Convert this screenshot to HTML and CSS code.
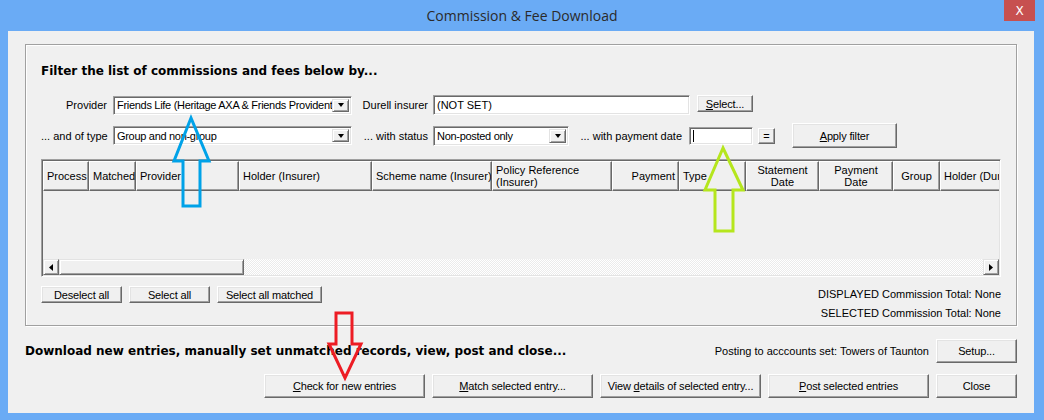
FILE: index.html
```html
<!DOCTYPE html>
<html lang="en">
<head>
    <meta charset="UTF-8">
    <title>Commission &amp; Fee Download</title>
    <link rel="stylesheet" href="styles.css">
</head>
<body>

<div class="window">
    <div class="titlebar">
        <span></span>
        <span class="title">Commission &amp; Fee Download</span>
        <button class="close-btn">X</button>
    </div>

    <div class="client">
        <div class="group">
            <h2>Filter the list of commissions and fees below by...</h2>

            <div class="filter-row first">
                <label class="lbl lbl-a">Provider</label>
                <div class="combo provider"><span>Friends Life (Heritage AXA &amp; Friends Provident)</span><i class="drop"></i></div>
                <label class="lbl lbl-b">Durell insurer</label>
                <div class="edit insurer">(NOT SET)</div>
                <button class="btn select-btn"><u>S</u>elect...</button>
            </div>

            <div class="filter-row second">
                <label class="lbl lbl-a">... and of type</label>
                <div class="combo provider"><span>Group and non-group</span><i class="drop"></i></div>
                <label class="lbl lbl-b">... with status</label>
                <div class="combo status"><span>Non-posted only</span><i class="drop"></i></div>
                <label class="lbl lbl-c">... with payment date</label>
                <div class="edit pay-date"><i class="caret"></i></div>
                <button class="btn eq-btn">=</button>
                <button class="btn apply-btn"><u>A</u>pply filter</button>
            </div>

            <div class="grid">
                <div class="grid-head">
                    <div style="width:46px">Process</div>
                    <div style="width:47px">Matched</div>
                    <div style="width:103px">Provider</div>
                    <div style="width:133px">Holder (Insurer)</div>
                    <div style="width:120px">Scheme name (Insurer)</div>
                    <div style="width:120px">Policy Reference<br>(Insurer)</div>
                    <div class="r" style="width:67px">Payment</div>
                    <div style="width:67px">Type</div>
                    <div class="c" style="width:73px">Statement<br>Date</div>
                    <div class="c" style="width:74px">Payment<br>Date</div>
                    <div class="c" style="width:47px">Group</div>
                    <div class="last">Holder (Durell)</div>
                </div>
                <div class="grid-body"></div>
                <div class="hscroll">
                    <div class="sb-btn">
                        <svg width="4" height="7" viewBox="0 0 4 7"><path d="M4 0V7L0 3.5Z" fill="#000"/></svg>
                    </div>
                    <div class="sb-thumb"></div>
                    <div class="sb-track"></div>
                    <div class="sb-btn">
                        <svg width="4" height="7" viewBox="0 0 4 7"><path d="M0 0V7L4 3.5Z" fill="#000"/></svg>
                    </div>
                </div>
            </div>

            <div class="list-actions">
                <div class="list-buttons">
                    <button class="btn w81">Deselect all</button>
                    <button class="btn w81">Select all</button>
                    <button class="btn w105">Select all matched</button>
                </div>
                <div class="totals">
                    <div>DISPLAYED Commission Total: None</div>
                    <div>SELECTED Commission Total: None</div>
                </div>
            </div>
        </div>

        <div class="summary">
            <h2>Download new entries, manually set unmatched records, view, post and close...</h2>
            <div class="posting">
                <span>Posting to acccounts set: Towers of Taunton</span>
                <button class="btn big w81">Setup...</button>
            </div>
        </div>

        <div class="actions">
            <button class="btn big w161"><u>C</u>heck for new entries</button>
            <button class="btn big w161"><u>M</u>atch selected entry...</button>
            <button class="btn big w161">View <u>d</u>etails of selected entry...</button>
            <button class="btn big w161"><u>P</u>ost selected entries</button>
            <button class="btn big w81">Close</button>
        </div>
    </div>

    <!-- annotation arrows drawn over the dialog -->
    <svg class="marks" width="1044" height="420" viewBox="0 0 1044 420">
        <polygon points="191,118 174,161 183,161 183,206 200,206 200,161 209,161" fill="none" stroke="#00a2e8" stroke-width="3"/>
        <polygon points="723,148 705,190 715,190 715,231 733,231 733,190 743,190" fill="none" stroke="#b5e61d" stroke-width="3"/>
        <polygon points="336,313 352,313 352,344 361,344 345,378 329,344 336,344" fill="none" stroke="#ed1c24" stroke-width="3"/>
    </svg>
</div>

</body>
</html>
```

FILE: styles.css
```css
* {
    box-sizing: border-box;
}
body {
    margin: 0;
    font-family: "Liberation Sans", Arial, sans-serif;
    font-size: 11px;
    color: #000;
    background: #fff;
}
.window {
    position: relative;
    width: 1044px;
    height: 420px;
    background: #6aabf5;
    overflow: hidden;
}
.titlebar {
    height: 31px;
    display: grid;
    grid-template-columns: 1fr auto 1fr;
    align-items: start;
    padding: 0 9px;
}
.title {
    font-family: "Open Sans", sans-serif;
    font-size: 14px;
    line-height: 31px;
    color: #2a2a2a;
}
.close-btn {
    justify-self: end;
    width: 31px;
    height: 21px;
    border: none;
    padding: 0;
    background: #c75050;
    color: #fff;
    font: 12px "DejaVu Sans", sans-serif;
}
.client {
    margin: 0 10px 0 8px;
    height: 382px;
    background: #f0f0f0;
    padding: 13px 17px 0;
}
.group {
    height: 282px;
    border: 1px solid #a0a0a0;
    box-shadow: inset 1px 1px #fff, 1px 1px #fff;
    padding: 20px 15px 0;
}
h2 {
    margin: 0;
    font: bold 12px/13px "DejaVu Sans", Verdana, sans-serif;
    white-space: nowrap;
}
.filter-row {
    display: flex;
    align-items: center;
}
.filter-row.first {
    height: 20px;
    margin-top: 17px;
}
.filter-row.second {
    height: 25px;
    margin-top: 8px;
}
.lbl {
    flex: none;
    text-align: right;
    white-space: nowrap;
}
.lbl-a {
    width: 66px;
    margin-right: 6px;
}
.lbl-b {
    width: 76px;
    margin-right: 5px;
}
.lbl-c {
    width: 113px;
    margin-right: 7px;
}
.combo, .edit {
    flex: none;
    display: flex;
    align-items: center;
    background: #fff;
    border: 1px solid;
    border-color: #a0a0a0 #fff #fff #a0a0a0;
    box-shadow: inset 1px 1px #696969, inset -1px -1px #e3e3e3;
    padding: 2px 2px 2px 3px;
    white-space: nowrap;
    overflow: hidden;
}
.combo span {
    flex: 1;
    overflow: hidden;
    letter-spacing: -0.3px;
}
.combo.provider {
    width: 239px;
    height: 19px;
}
.combo.status {
    width: 136px;
    height: 20px;
}
.drop {
    flex: none;
    width: 17px;
    height: 100%;
    display: flex;
    align-items: center;
    justify-content: center;
    background: #f0f0f0;
    border: 1px solid;
    border-color: #e3e3e3 #696969 #696969 #e3e3e3;
    box-shadow: inset 1px 1px #fff, inset -1px -1px #a0a0a0;
}
.drop::after {
    content: "";
    border-left: 3.5px solid transparent;
    border-right: 3.5px solid transparent;
    border-top: 4px solid #000;
}
.insurer {
    width: 257px;
    height: 20px;
}
.pay-date {
    width: 64px;
    height: 18px;
}
.caret {
    width: 1px;
    height: 12px;
    background: #000;
}
.btn {
    flex: none;
    padding: 0;
    background: #f0f0f0;
    border: 1px solid;
    border-color: #fff #696969 #696969 #fff;
    box-shadow: inset -1px -1px #a0a0a0, inset 1px 1px #e3e3e3;
    font: 11px "Liberation Sans", Arial, sans-serif;
    letter-spacing: -0.15px;
    color: #000;
    height: 17px;
}
.select-btn {
    width: 56px;
    margin-left: 7px;
    align-self: flex-start;
}
.eq-btn {
    width: 17px;
    height: 16px;
    margin-left: 5px;
}
.apply-btn {
    width: 105px;
    height: 25px;
    margin-left: 17px;
}
.grid {
    margin-top: 11px;
    height: 118px;
    display: flex;
    flex-direction: column;
    border: 1px solid;
    border-color: #a0a0a0 #fff #fff #a0a0a0;
    box-shadow: inset 1px 1px #696969, inset -1px -1px #e3e3e3;
    padding: 1px;
}
.grid-head {
    display: flex;
    height: 30px;
    flex: none;
    overflow: hidden;
}
.grid-head div {
    flex: none;
    height: 30px;
    display: flex;
    align-items: center;
    padding: 0 3px;
    line-height: 12px;
    white-space: nowrap;
    overflow: hidden;
    background: #f0f0f0;
    border: 1px solid;
    border-color: #fff #696969 #696969 #fff;
    box-shadow: inset -1px -1px #a0a0a0;
}
.grid-head div.r {
    justify-content: flex-end;
}
.grid-head div.c {
    justify-content: center;
    text-align: center;
}
.grid-head div.last {
    flex: 1;
    border-right: none;
    box-shadow: inset 0 -1px #a0a0a0;
}
.grid-body {
    flex: 1;
    background: #f0f0f0;
}
.hscroll {
    display: flex;
    height: 16px;
    flex: none;
}
.sb-btn, .sb-thumb {
    flex: none;
    background: #f0f0f0;
    border: 1px solid;
    border-color: #e3e3e3 #696969 #696969 #e3e3e3;
    box-shadow: inset 1px 1px #fff, inset -1px -1px #a0a0a0;
}
.sb-btn {
    width: 16px;
    display: flex;
    align-items: center;
    justify-content: center;
}
.sb-thumb {
    width: 185px;
}
.sb-track {
    flex: 1;
    background-image: repeating-conic-gradient(#fff 0% 25%, #ebebeb 0% 50%);
    background-size: 2px 2px;
}
.list-actions {
    display: flex;
    justify-content: space-between;
    align-items: flex-start;
    margin-top: 8px;
}
.list-buttons {
    display: flex;
    gap: 7px;
    padding-top: 1px;
}
.w81 {
    width: 81px;
}
.w105 {
    width: 105px;
}
.w161 {
    width: 161px;
}
.totals {
    text-align: right;
    line-height: 19px;
}
.summary {
    display: flex;
    align-items: center;
    justify-content: space-between;
    height: 24px;
    margin-top: 13px;
}
.posting {
    display: flex;
    align-items: center;
    gap: 7px;
}
.btn.big {
    height: 24px;
}
.actions {
    display: flex;
    justify-content: flex-end;
    gap: 7px;
    margin-top: 11px;
}
.marks {
    position: absolute;
    left: 0;
    top: 0;
    pointer-events: none;
}
```
